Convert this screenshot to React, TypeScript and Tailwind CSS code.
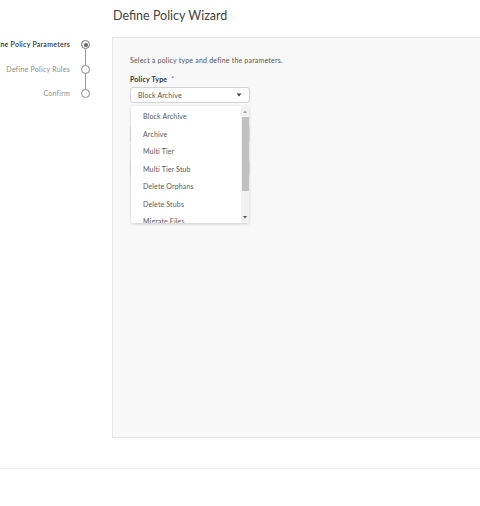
const FONT = { fontFamily: "Lato, 'Open Sans', sans-serif" };

const steps = [
  { label: "Define Policy Parameters", active: true },
  { label: "Define Policy Rules", active: false },
  { label: "Confirm", active: false },
];

const policyTypes = [
  "Block Archive",
  "Archive",
  "Multi Tier",
  "Multi Tier Stub",
  "Delete Orphans",
  "Delete Stubs",
  "Migrate Files",
];

function Stepper() {
  return (
    <div className="flex w-[112px] shrink-0 flex-col pt-[3px]">
      {steps.map((s, i) => (
        <div key={s.label} className="flex flex-col">
          <div className="flex h-[9px] items-center justify-end gap-[11px] pr-[22px]">
            <span
              className={
                s.active
                  ? "whitespace-nowrap text-[7px] font-semibold tracking-[0.25px] text-[#333]"
                  : "whitespace-nowrap text-[7px] tracking-[0.25px] text-[#8a8a8a]"
              }
            >
              {s.label}
            </span>
            {s.active ? (
              <span className="flex h-[9px] w-[9px] shrink-0 items-center justify-center rounded-full border-[1.5px] border-[#777]">
                <span className="h-[4px] w-[4px] rounded-full bg-[#666]" />
              </span>
            ) : (
              <span className="h-[9px] w-[9px] shrink-0 rounded-full border-[1.5px] border-[#8c8c8c] bg-white" />
            )}
          </div>
          {i < steps.length - 1 && (
            <div className="flex h-[15.5px] justify-end pr-[26px]">
              <span className="w-px bg-[#9a9a9a]" />
            </div>
          )}
        </div>
      ))}
    </div>
  );
}

function Caret() {
  return (
    <svg width="6" height="4" viewBox="0 0 6 4">
      <path d="M0.5 0.5 L5.5 0.5 L3 3.5 Z" fill="#444" />
    </svg>
  );
}

function Dropdown() {
  return (
    <div className="absolute left-[1px] top-[19px] flex h-[117px] w-[118px] overflow-hidden rounded-[2px] bg-white shadow-[0_1px_3px_rgba(0,0,0,0.18)]">
      <ul className="flex flex-1 flex-col pt-[1.5px]">
        {policyTypes.map((p) => (
          <li
            key={p}
            className="flex h-[17.5px] shrink-0 items-center pl-[12px] text-[7px] tracking-[0.15px] text-[#595959]"
          >
            {p}
          </li>
        ))}
      </ul>
      <div className="flex w-[8px] flex-col items-center bg-[#f1f1f1]">
        <div className="flex h-[11px] items-center justify-center">
          <svg width="4" height="3" viewBox="0 0 4 3">
            <path d="M0 3 L2 0.5 L4 3 Z" fill="#a3a3a3" />
          </svg>
        </div>
        <div className="h-[74px] w-[7px] bg-[#c1c1c1]" />
        <div className="flex-1" />
        <div className="flex h-[9px] items-center justify-center pb-[2px]">
          <svg width="4" height="3" viewBox="0 0 4 3">
            <path d="M0 0 L4 0 L2 2.5 Z" fill="#505050" />
          </svg>
        </div>
      </div>
    </div>
  );
}

function Panel() {
  return (
    <div className="h-[401px] flex-1 border border-r-0 border-[#e6e6e6] bg-[#f8f8f8] pl-[17px] pt-[17px]">
      <p className="text-[7px] leading-[10px] tracking-[0.2px] text-[#555]">
        Select a policy type and define the parameters.
      </p>
      <p className="mt-[9px] text-[7px] font-bold leading-[10px] tracking-[0.2px] text-[#333]">
        Policy Type <span className="ml-[2px] font-normal text-[#777]">*</span>
      </p>
      <div className="relative mt-[3px] w-[120px]">
        <div className="flex h-[16px] items-center justify-between rounded-[3px] border border-[#d2d2d2] bg-white pl-[7px] pr-[7px]">
          <span className="text-[7px] tracking-[0.15px] text-[#555]">Block Archive</span>
          <Caret />
        </div>
        <div className="mt-[22px] h-[18px] w-[120px] rounded-[3px] border border-[#e0e0e0] bg-white" />
        <div className="mt-[16px] h-[18px] w-[120px] rounded-[3px] border border-[#e0e0e0] bg-white" />
        <Dropdown />
      </div>
    </div>
  );
}

export default function App() {
  return (
    <div className="relative h-[506px] w-[480px] overflow-hidden bg-white" style={FONT}>
      <h1 className="h-[37px] pl-[113px] pt-[7px] text-[12.5px] font-normal leading-[18px] text-[#444]">
        Define Policy Wizard
      </h1>
      <div className="flex">
        <Stepper />
        <Panel />
      </div>
      <div className="mt-[30px] border-t border-[#ececec]" />
    </div>
  );
}
